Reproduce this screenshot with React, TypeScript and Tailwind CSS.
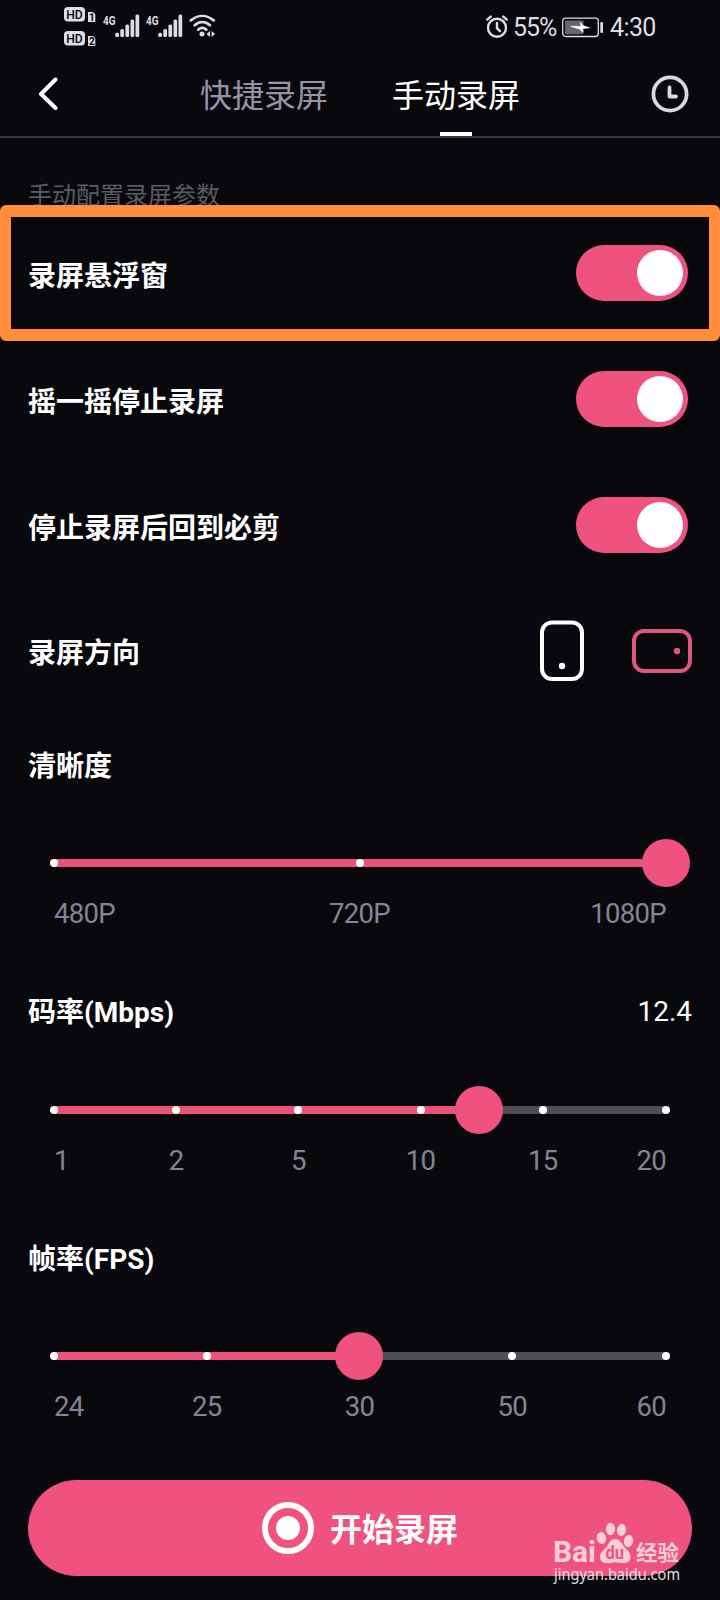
import React, { useState } from 'react';

interface ToggleRowProps {
  label: string;
  highlighted?: boolean;
}

interface LevelSliderProps {
  title: string;
  labels: string[];
  percent: number;
  value?: string;
}

const SignalIcon: React.FC = () => (
  <svg width="38" height="26" viewBox="0 0 38 26" fill="#dedde4">
    <text x="0" y="12.7" fontSize="13.5" fontWeight="700" textLength="12.5" lengthAdjust="spacingAndGlyphs">4G</text>
    <rect x="12.300" y="20.800" width="3.700" height="4.200" rx="1.500" />
    <rect x="17.300" y="17" width="3.700" height="8" rx="1.500" />
    <rect x="22.400" y="12.500" width="3.700" height="12.500" rx="1.500" />
    <rect x="27.500" y="7.500" width="3.700" height="17.500" rx="1.500" />
    <rect x="32.500" y="2.500" width="3.700" height="22.500" rx="1.500" />
  </svg>
);

const HdBadge: React.FC<{ sim: string }> = ({ sim }) => (
  <svg width="32" height="18" viewBox="0 0 32 18">
    <rect x="0" y="1" width="21" height="14.500" rx="4" fill="#dedde4" />
    <text x="2.200" y="13" fontSize="13" fontWeight="500" fill="#09090d" textLength="16.500" lengthAdjust="spacingAndGlyphs">HD</text>
    <path d="M24 6h5l2.300 2.300V16H24z" fill="#dedde4" />
    <text x="25" y="14.800" fontSize="10" fontWeight="700" fill="#09090d">{sim}</text>
  </svg>
);

const WifiIcon: React.FC = () => (
  <svg width="28" height="24" viewBox="0 0 28 24" fill="none" stroke="#dedde4" strokeWidth="2.700" strokeLinecap="round">
    <path d="M1.800 6.400C9 0.500 17.500 0.500 24.700 6.400" />
    <path d="M5.600 11.200C10.400 7 16.200 7 21 11.200" />
    <path d="M9.300 15.600C12 13.400 14.600 13.400 17.300 15.600" />
    <circle cx="13" cy="20" r="2.500" fill="#dedde4" stroke="none" />
    <path d="M21 17v6l-3.500-3zM22.600 17v6l3.500-3z" fill="#dedde4" stroke="none" />
  </svg>
);

const AlarmIcon: React.FC = () => (
  <svg width="22" height="24" viewBox="0 0 22 24" fill="none" stroke="#dedde4" strokeWidth="2.400" strokeLinecap="round">
    <circle cx="11" cy="12.800" r="9" />
    <path d="M11 8v5.200l3 3" />
    <path d="M1.300 4.600l3.400-3M20.700 4.600l-3.400-3" />
  </svg>
);

const BatteryIcon: React.FC = () => (
  <svg width="42" height="21" viewBox="0 0 42 21">
    <rect x="0.700" y="1.200" width="35.600" height="18.300" rx="3" fill="none" stroke="#dedde4" strokeWidth="1.300" />
    <rect x="3" y="3.500" width="18.500" height="13.700" rx="1" fill="#68676e" />
    <path d="M9 9.300l10 .3-.5-4 2.500 3.200 6.500 2-7 .7.500 3.800-3.500-3.300z" fill="#fff" stroke="#fff" strokeWidth="0.800" />
    <rect x="38.300" y="5" width="2.700" height="11" rx="1" fill="#dedde4" />
  </svg>
);

const StatusBar: React.FC = () => (
  <div className="flex h-[54px] items-start pl-16 pr-[65px] text-[#dedde4]">
    <div className="flex flex-col gap-[6px] pt-[6px]">
      <HdBadge sim="1" />
      <HdBadge sim="2" />
    </div>
    <div className="ml-[7px] flex gap-[5px] pt-3">
      <SignalIcon />
      <SignalIcon />
    </div>
    <div className="ml-[5px] pt-[14px]">
      <WifiIcon />
    </div>
    <div className="ml-auto flex h-[54px] items-center">
      <AlarmIcon />
      <span className="ml-[5px] w-[49px] whitespace-nowrap pt-[2px] text-[25px] tracking-[-1.1px]">55%</span>
      <BatteryIcon />
      <span className="ml-[6px] w-[45px] whitespace-nowrap pt-[2px] text-[25px] tracking-[-0.6px]">4:30</span>
    </div>
  </div>
);

const Header: React.FC = () => (
  <header className="flex h-[84px] items-stretch border-b-2 border-[#35353b]">
    <button className="w-[200px] pb-[2px] pl-[38px]">
      <svg width="22" height="34" viewBox="0 0 22 34" fill="none" stroke="#fff" strokeWidth="4" strokeLinecap="round" strokeLinejoin="round">
        <path d="M17.500 2.500L3 17l14.500 14" />
      </svg>
    </button>
    <button className="w-32 whitespace-nowrap pt-[1px] text-[32px] text-[#9695a8]">快捷录屏</button>
    <button className="relative ml-16 w-32 whitespace-nowrap pt-[1px] text-[32px] text-white">
      手动录屏
      <span className="absolute bottom-0 left-12 h-1 w-8 bg-white" />
    </button>
    <button className="ml-auto pb-[2px] pr-[31px]">
      <svg width="38" height="38" viewBox="0 0 38 38" fill="none" stroke="#d9d8e0" strokeLinecap="round" strokeLinejoin="round">
        <circle cx="19" cy="19" r="16.600" strokeWidth="3.800" />
        <path d="M18.500 12.500v9h6.500" strokeWidth="3.800" />
      </svg>
    </button>
  </header>
);

const ToggleRow: React.FC<ToggleRowProps> = ({ label, highlighted }) => {
  const [on, setOn] = useState(true);

  return (
    <div className="relative flex h-[126px] items-center justify-between pl-7 pr-8">
      <span className="pt-[7px] text-[28px] font-bold text-white">{label}</span>
      <button
        onClick={() => setOn(!on)}
        className={`flex h-14 w-28 items-center rounded-full px-[5px] ${on ? 'justify-end bg-[#ef527f]' : 'justify-start bg-[#504f54]'}`}
      >
        <span className="h-[46px] w-[46px] rounded-full bg-white" />
      </button>
      {highlighted && (
        <div className="pointer-events-none absolute inset-x-0 -bottom-[4.500px] -top-[5.500px] rounded-[6px] border-x-[11.500px] border-y-[12px] border-[#ff8d3c]" />
      )}
    </div>
  );
};

const OrientationRow: React.FC = () => (
  <div className="flex h-[126px] items-center justify-between pl-7 pr-[26px]">
    <span className="pt-[5px] text-[28px] font-bold text-white">录屏方向</span>
    <div className="flex items-center gap-[46px]">
      <svg width="46" height="62" viewBox="0 0 46 62" fill="none">
        <rect x="2" y="2.500" width="40" height="56.500" rx="10" stroke="#fff" strokeWidth="4" />
        <circle cx="22" cy="46" r="3.200" fill="#fff" />
      </svg>
      <svg width="62" height="46" viewBox="0 0 62 46" fill="none">
        <rect x="2" y="3" width="56" height="40" rx="10" stroke="#e0557c" strokeWidth="4" />
        <circle cx="45" cy="23" r="3.200" fill="#e0557c" />
      </svg>
    </div>
  </div>
);

// distance between the first and the last tick
const TICK_SPAN = 611;

const LevelSlider: React.FC<LevelSliderProps> = ({ title, labels, percent, value }) => {
  const step = TICK_SPAN / (labels.length - 1);
  const getAlign = (i: number) => {
    if (i === 0) return 'justify-start';
    return i === labels.length - 1 ? 'ml-auto justify-end' : 'justify-center';
  };

  return (
    <section className="h-[246.500px] pt-[31px]">
      <div className="flex h-10 items-center justify-between px-7">
        <span className="pt-[3px] text-[28px] font-bold text-white">{title}</span>
        {value && <span className="text-[28px] text-white">{value}</span>}
      </div>
      <div className="relative mx-[54px] mt-[54px] flex h-12 items-center">
        <div className="h-2 w-full bg-[#504e53]">
          <div className="h-2 bg-[#ea5379]" style={{ width: `${percent}%` }} />
        </div>
        <div className="absolute -inset-x-1 flex" style={{ columnGap: step - 8 }}>
          {labels.map((l) => (
            <span key={l} className="h-2 w-2 shrink-0 rounded-full bg-white last:ml-auto" />
          ))}
        </div>
        <div className="absolute h-12 w-12 -translate-x-1/2 rounded-full bg-[#ef527f]" style={{ left: `${percent}%` }} />
      </div>
      <div className="mx-[54px] mt-[7px] flex h-10 items-center text-[27.500px] tracking-[-0.700px] text-[#858494]" style={{ columnGap: step }}>
        {labels.map((l, i) => (
          <span key={l} className={`flex w-0 whitespace-nowrap ${getAlign(i)}`}>
            {l}
          </span>
        ))}
      </div>
    </section>
  );
};

const Watermark: React.FC = () => (
  <svg className="absolute left-[550px] top-[1518px]" width="140" height="74" viewBox="0 0 140 74" fill="#fff">
    <g opacity="0.72">
      <text x="3" y="43.500" fontSize="29" fontWeight="700" textLength="43" lengthAdjust="spacingAndGlyphs">Bai</text>
      <ellipse cx="51.500" cy="20" rx="4.700" ry="6" transform="rotate(-12 51.500 20)" />
      <ellipse cx="60.500" cy="11" rx="4.500" ry="6.200" />
      <ellipse cx="71.500" cy="12" rx="4.500" ry="6.200" transform="rotate(10 71.500 12)" />
      <ellipse cx="78.500" cy="23" rx="4.700" ry="6" transform="rotate(10 78.500 23)" />
      <path d="M65 21c5 0 7 5 10 8.500 3 3.500 5.500 5 5.500 9.500 0 4-3 6-7 6-3 0-5-.8-8.500-.8s-5 .8-8 .8c-4 0-7-2-7-6 0-4.500 3-6 6-9.500 3-3.500 4-8.500 9-8.500z" />
      <text x="86" y="41.500" fontSize="21" fontWeight="700" textLength="43" lengthAdjust="spacingAndGlyphs">经验</text>
    </g>
    <text x="55.500" y="41" fontSize="18" fontWeight="700" fill="#ef527f" textLength="18.500" lengthAdjust="spacingAndGlyphs">du</text>
    <text x="4" y="61.500" fontSize="16" opacity="0.85" fontFamily="Noto Sans, sans-serif" textLength="126" lengthAdjust="spacingAndGlyphs">jingyan.baidu.com</text>
  </svg>
);

const App: React.FC = () => {
  return (
    <div className="relative h-[1600px] w-[720px] overflow-hidden bg-[#09090d] font-[Roboto,'Noto_Sans_CJK_SC',sans-serif] leading-normal">
      <StatusBar />
      <Header />
      <p className="h-[72px] pl-7 pt-[40px] text-[24px] leading-9 text-[#5b5b63]">手动配置录屏参数</p>
      <ToggleRow label="录屏悬浮窗" highlighted />
      <ToggleRow label="摇一摇停止录屏" />
      <ToggleRow label="停止录屏后回到必剪" />
      <OrientationRow />
      <LevelSlider title="清晰度" labels={['480P', '720P', '1080P']} percent={100} />
      <LevelSlider title="码率(Mbps)" labels={['1', '2', '5', '10', '15', '20']} percent={69.5} value="12.4" />
      <LevelSlider title="帧率(FPS)" labels={['24', '25', '30', '50', '60']} percent={49.9} />
      <button className="mx-7 mt-[26.500px] flex h-24 w-[664px] items-center rounded-full bg-[#ef527f] pl-[234px] text-[32px] font-bold text-white">
        <svg width="52" height="52" viewBox="0 0 52 52" fill="none">
          <circle cx="26" cy="26" r="23" stroke="#fff" strokeWidth="6" />
          <circle cx="26" cy="26" r="12" fill="#fff" />
        </svg>
        <span className="ml-4 pt-1">开始录屏</span>
      </button>
      <Watermark />
    </div>
  );
};

export default App;
